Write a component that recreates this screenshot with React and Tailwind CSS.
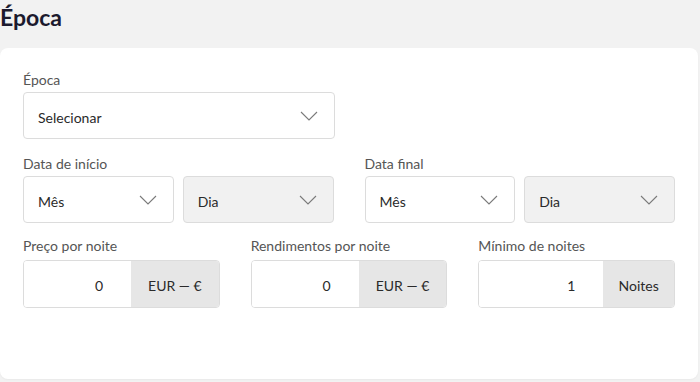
function Chevron() {
  return (
    <svg width="18" height="10" viewBox="0 0 18 10" fill="none" className="shrink-0">
      <path d="M1 1l8 8 8-8" stroke="#7a7a7a" strokeWidth="1.1" />
    </svg>
  );
}

function SelectBox({ label, muted }) {
  return (
    <div className={`flex h-[47px] flex-1 items-center justify-between rounded border border-[#dcdcdc] pl-[14px] pr-[16px] ${muted ? 'bg-[#f1f1f1]' : 'bg-white'}`}>
      <span className="pt-[3px] text-[14px] text-[#2a2a2a]">{label}</span>
      <Chevron />
    </div>
  );
}

function AddonInput({ label, value, addon, inputW }) {
  return (
    <div>
      <div className="mb-[6px] text-[14px] leading-[16px] text-[#555]">{label}</div>
      <div className="flex h-[48px] overflow-hidden rounded border border-[#dcdcdc]">
        <div className={`flex items-center justify-end bg-white pr-[28px] pt-[2px] text-[14px] text-[#2a2a2a] ${inputW}`}>{value}</div>
        <div className="flex flex-1 items-center justify-center bg-[#e6e6e6] pt-[2px] text-[14px] text-[#2a2a2a]">{addon}</div>
      </div>
    </div>
  );
}

export default function App() {
  return (
    <div className="h-[382px] w-[700px] bg-[#f2f2f2] font-['Lato',sans-serif]">
      <h1 className="h-[48px] pt-[3px] text-[23px] font-bold leading-[28px] text-[#1b1a2e]">Época</h1>
      <div className="h-[331px] w-[698px] rounded-lg bg-white px-[23px] pt-[24px] shadow-[0_1px_2px_rgba(0,0,0,0.04)]">
        <div className="w-[312px]">
          <div className="mb-[4px] text-[14px] leading-[16px] text-[#555]">Época</div>
          <SelectBox label="Selecionar" />
        </div>

        <div className="mt-[17px] grid grid-cols-2 gap-x-[31px]">
          <div>
            <div className="mb-[4px] text-[14px] leading-[16px] text-[#555]">Data de início</div>
            <div className="flex gap-[9px]">
              <SelectBox label="Mês" />
              <SelectBox label="Dia" muted />
            </div>
          </div>
          <div>
            <div className="mb-[4px] text-[14px] leading-[16px] text-[#555]">Data final</div>
            <div className="flex gap-[9px]">
              <SelectBox label="Mês" />
              <SelectBox label="Dia" muted />
            </div>
          </div>
        </div>

        <div className="mt-[15px] grid grid-cols-3 gap-x-[31px]">
          <AddonInput label="Preço por noite" value="0" addon="EUR — €" inputW="w-[107px]" />
          <AddonInput label="Rendimentos por noite" value="0" addon="EUR — €" inputW="w-[107px]" />
          <AddonInput label="Mínimo de noites" value="1" addon="Noites" inputW="w-[124px]" />
        </div>
      </div>
    </div>
  );
}
